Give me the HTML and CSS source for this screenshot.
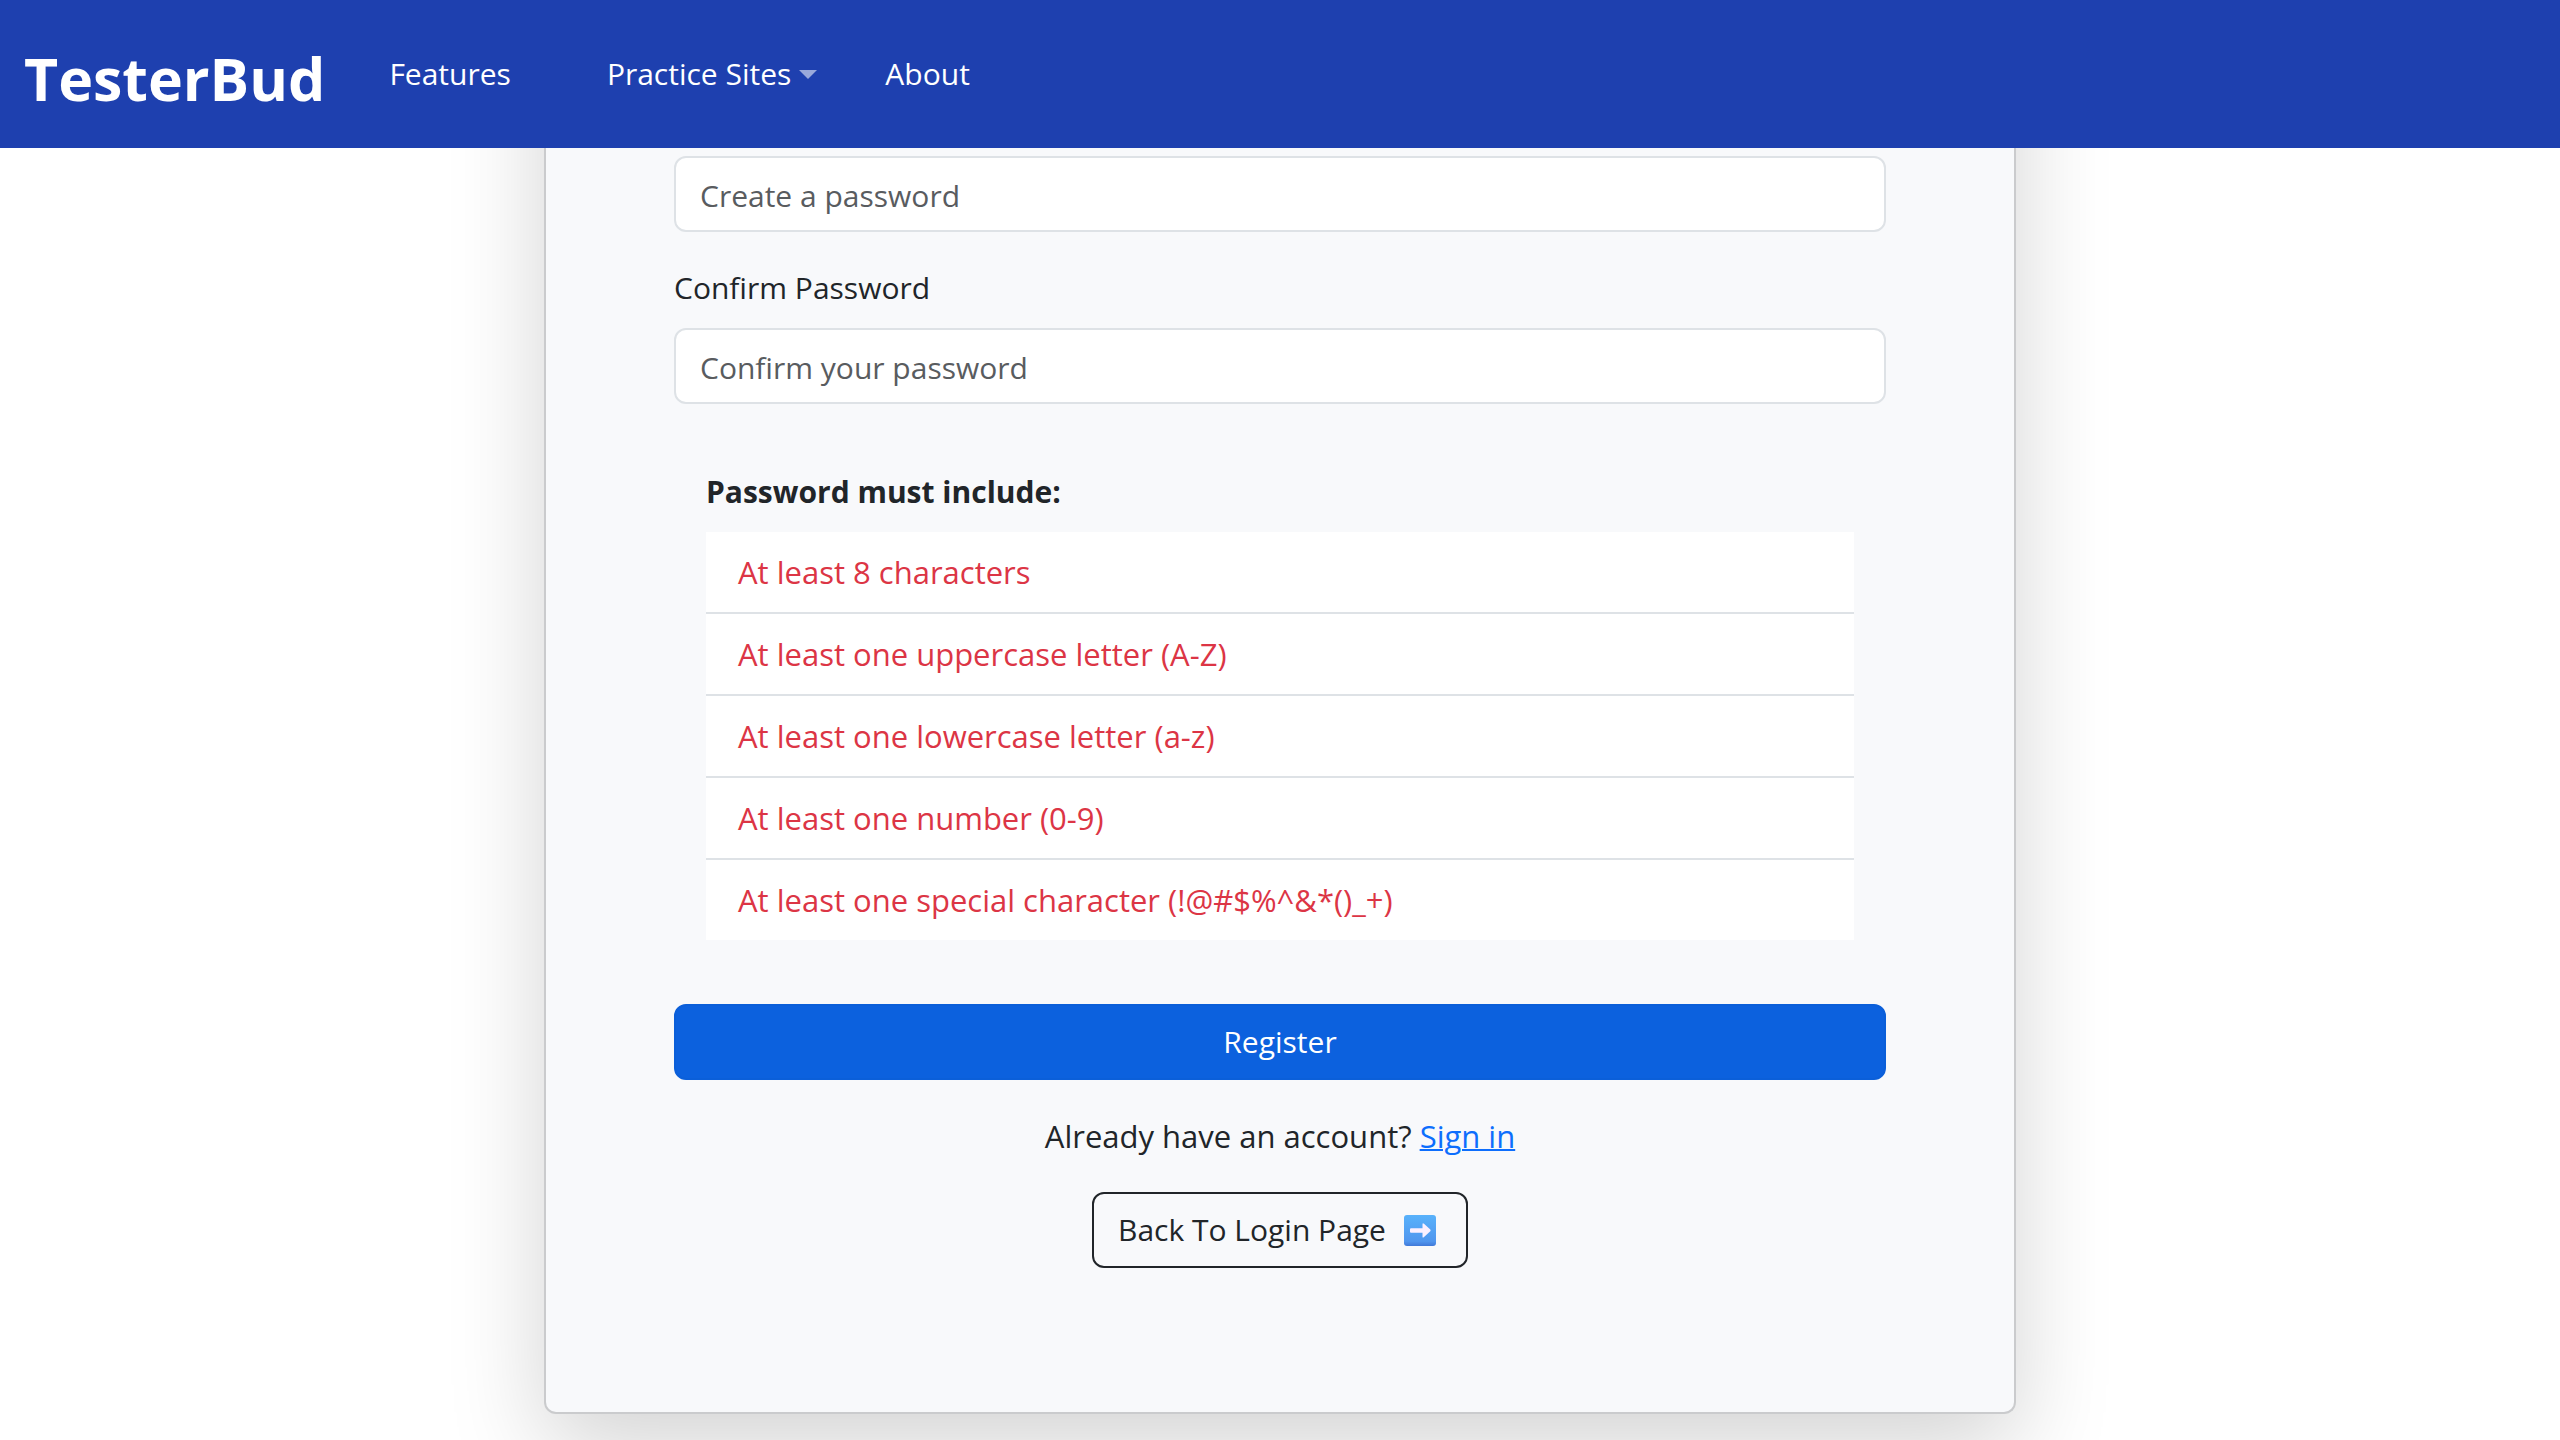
FILE: index.html
```html
<!DOCTYPE html>
<html lang="en">
<head>
  <meta charset="utf-8">
  <meta name="viewport" content="width=device-width, initial-scale=1">
  <title>TesterBud</title>
  <link rel="stylesheet" href="styles.css">
</head>
<body>
  <header class="navbar">
    <a class="brand" href="#">TesterBud</a>
    <nav class="nav">
      <a class="nav-link nav-link-wide" href="#">Features</a>
      <a class="nav-link nav-link-menu" href="#">Practice Sites<span class="caret"></span></a>
      <a class="nav-link" href="#">About</a>
    </nav>
  </header>

  <main class="page">
    <form class="card">
      <div class="field">
        <input class="input" type="password" placeholder="Create a password" aria-label="Create a password">
      </div>
      <div class="field">
        <label class="label" for="confirm">Confirm Password</label>
        <input class="input" id="confirm" type="password" placeholder="Confirm your password">
      </div>

      <section class="rules">
        <h2 class="rules-title">Password must include:</h2>
        <ul class="rules-list">
          <li class="rule">At least 8 characters</li>
          <li class="rule">At least one uppercase letter (A-Z)</li>
          <li class="rule">At least one lowercase letter (a-z)</li>
          <li class="rule">At least one number (0-9)</li>
          <li class="rule">At least one special character (!@#$%^&amp;*()_+)</li>
        </ul>
      </section>

      <button class="btn btn-primary" type="submit">Register</button>
      <p class="signin">Already have an account? <a class="link" href="#">Sign in</a></p>
      <button class="btn btn-outline" type="button">
        Back To Login Page
        <svg class="arrow" viewBox="0 0 32 31" aria-hidden="true">
          <defs>
            <linearGradient id="tile" x1="0" y1="0" x2="0" y2="1">
              <stop offset="0" stop-color="#58b2fb"/>
              <stop offset="0.85" stop-color="#5096ee"/>
              <stop offset="1" stop-color="#4079d8"/>
            </linearGradient>
          </defs>
          <rect width="32" height="31" rx="3" fill="url(#tile)"/>
          <path d="M7 13.2H18.5V9.5Q18.5 7.4 20 8.8L26.3 14.6Q27 15.4 26.3 16.2L20 22.1Q18.5 23.4 18.5 21.4V17.7H7Q6 17.7 6 16.7V14.2Q6 13.2 7 13.2Z" fill="#fbf0ff"/>
        </svg>
      </button>
    </form>
  </main>
</body>
</html>
```
FILE: styles.css
```css
*,
*::before,
*::after {
  box-sizing: border-box;
}

body {
  min-height: 100vh;
  margin: 0;
  background: #fff;
  color: #212529;
  font-family: "Open Sans", "Noto Sans", sans-serif;
  font-size: 30px;
  line-height: 48px;
}

.navbar {
  position: fixed;
  top: 0;
  left: 0;
  right: 0;
  z-index: 10;
  display: flex;
  align-items: center;
  height: 148px;
  padding: 0 24px;
  background: #1e40af;
}

.brand {
  padding-top: 8px;
  color: #fff;
  font-size: 59px;
  font-weight: 700;
  line-height: 92px;
  text-decoration: none;
}

.nav {
  display: flex;
  gap: 68px;
  margin-left: 64px;
}

.nav-link {
  display: flex;
  align-items: center;
  color: #fff;
  text-decoration: none;
}

.nav-link-wide {
  padding-right: 28px;
}

.caret {
  margin-left: 8px;
  border: 9px solid transparent;
  border-top-color: rgba(255, 255, 255, 0.55);
  border-bottom: 0;
}

.page {
  width: 57.5%;
  margin: 0 auto;
  padding-bottom: 26px;
}

.card {
  display: flex;
  flex-direction: column;
  padding: 156px 128px 144px;
  background: #f8f9fb;
  border: 2px solid #cacbcd;
  border-top: 0;
  border-radius: 0 0 12px 12px;
  box-shadow: 0 32px 96px rgba(0, 0, 0, 0.175);
}

.field {
  display: flex;
  flex-direction: column;
  gap: 16px;
  margin-bottom: 32px;
}

.input {
  width: 100%;
  height: 76px;
  padding: 14px 24px 12px;
  background: #fff;
  border: 2px solid #dee2e6;
  border-radius: 12px;
  color: inherit;
  font: inherit;
}

.input::placeholder {
  color: #595c5f;
  opacity: 1;
}

.rules {
  margin-bottom: 32px;
  padding: 32px;
}

.rules-title {
  margin: 0 0 16px;
  font-size: 30px;
  font-weight: 700;
}

.rules-list {
  margin: 0;
  padding: 0;
  list-style: none;
  font-size: 31px;
}

.rule {
  padding: 16px 32px;
  background: #fff;
  color: #dc3545;
}

.rule + .rule {
  border-top: 2px solid #dee2e6;
}

.btn {
  height: 76px;
  padding: 12px 24px;
  border: 2px solid;
  border-radius: 12px;
  font: inherit;
}

.btn-primary {
  background: #0c61de;
  border-color: #0b5fd9;
  color: #fff;
}

.signin {
  margin: 32px 0;
  font-size: 31px;
  text-align: center;
}

.link {
  color: #0d6efd;
  text-decoration-thickness: 2px;
}

.btn-outline {
  display: flex;
  align-items: center;
  align-self: center;
  gap: 18px;
  padding-right: 30px;
  background: transparent;
  border-color: #212529;
  color: #212529;
}

.arrow {
  width: 32px;
  height: 31px;
}
```
